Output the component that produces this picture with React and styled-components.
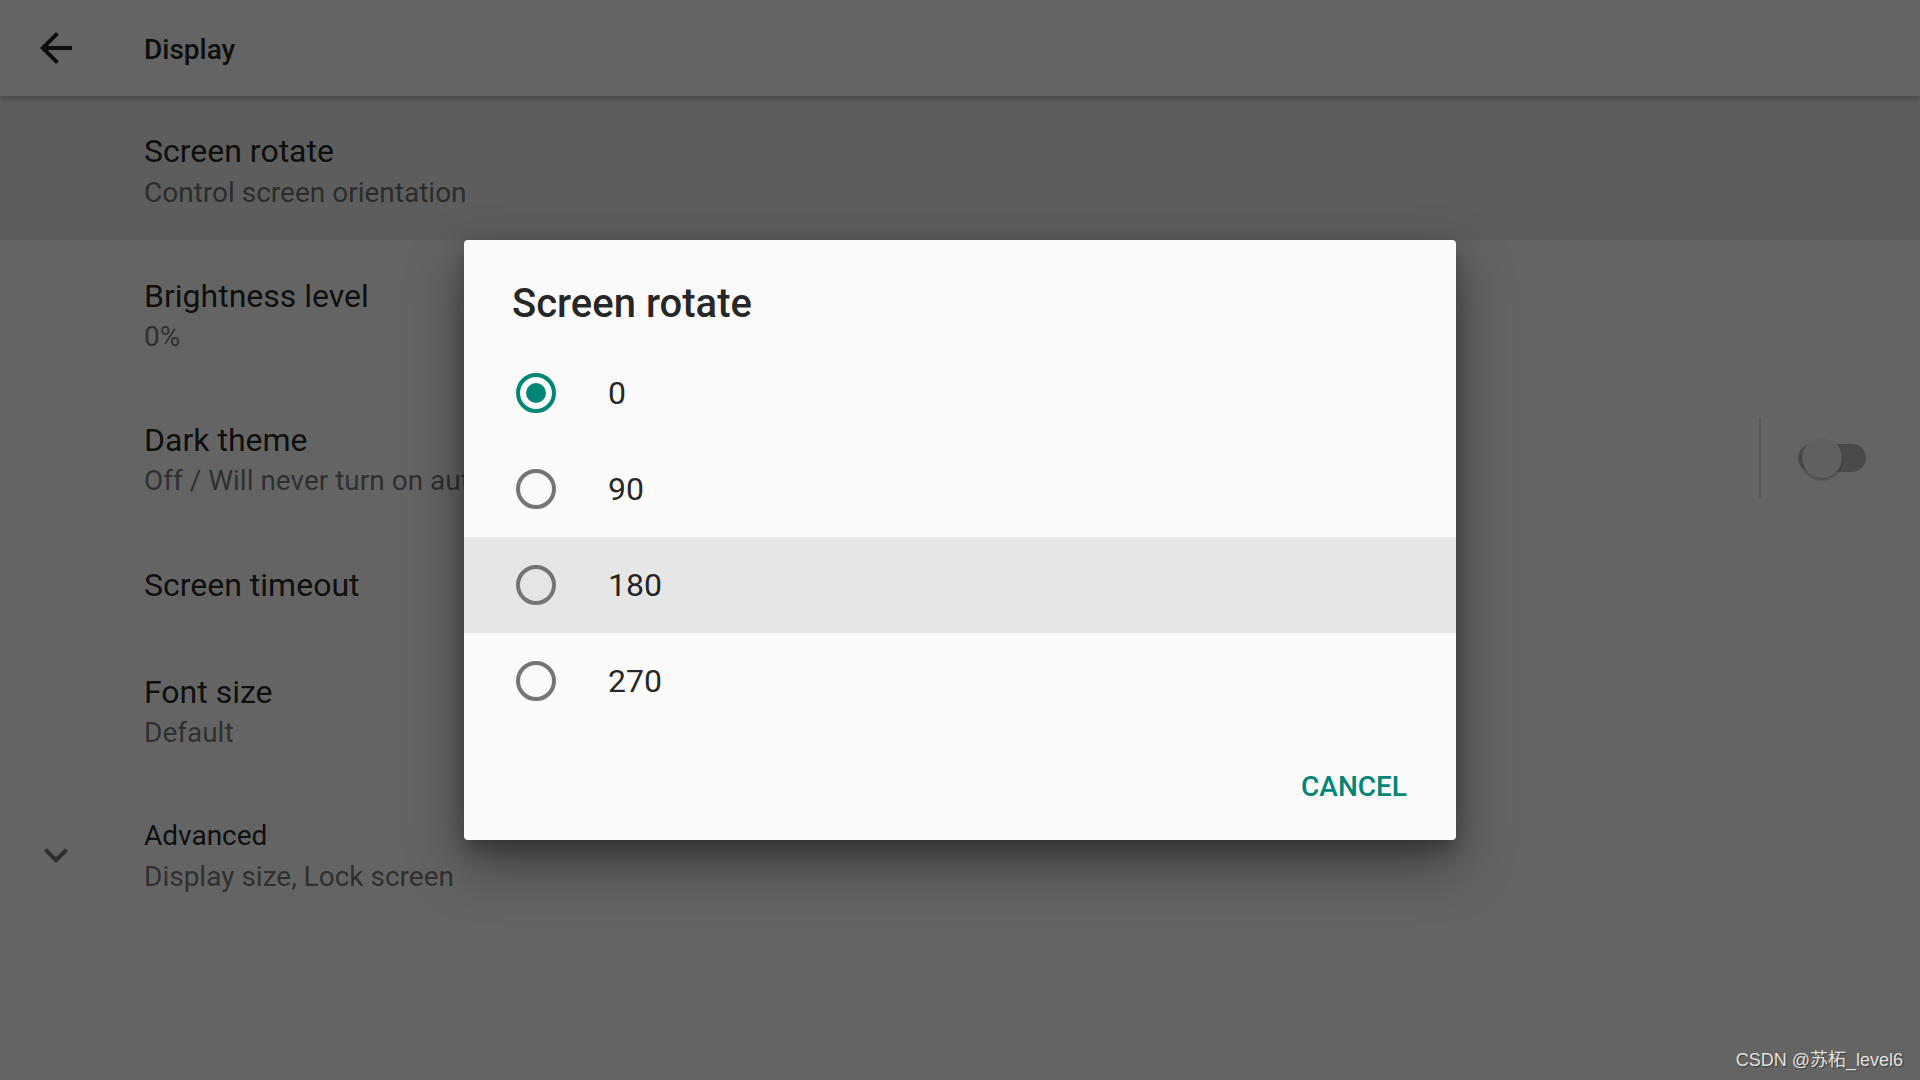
import React from 'react';
import styled, { createGlobalStyle } from 'styled-components';

const GlobalStyle = createGlobalStyle`
  html, body {
    margin: 0;
    padding: 0;
  }
  body {
    font-family: Roboto, "Noto Sans", sans-serif;
    background: #fafafa;
  }
`;

const Screen = styled.div`
  position: relative;
  width: 1920px;
  height: 1080px;
  overflow: hidden;
  background: #fafafa;
`;

const Toolbar = styled.div`
  position: relative;
  z-index: 1;
  display: flex;
  align-items: center;
  height: 96px;
  background: #fafafa;
  box-shadow: 0 2px 5px rgba(0, 0, 0, 0.28);
`;

const NavButton = styled.div`
  display: flex;
  align-items: center;
  justify-content: center;
  width: 112px;
  height: 96px;
`;

const ToolbarTitle = styled.div`
  margin-left: 32px;
  padding-top: 2px;
  font-size: 28px;
  font-weight: 500;
  color: rgba(0, 0, 0, 0.87);
`;

const PrefRow = styled.div`
  display: flex;
  align-items: center;
  background: ${(p) => (p.$active ? '#e8e8e8' : 'transparent')};
`;

const IconSlot = styled.div`
  display: flex;
  align-items: center;
  justify-content: center;
  align-self: stretch;
  box-sizing: border-box;
  width: 112px;
  padding-top: 6px;
  flex-shrink: 0;
`;

const PrefText = styled.div`
  flex: 1;
  min-width: 0;
  padding: ${(p) =>
    p.$first ? '35px 0 29px 32px' : p.$single ? '37px 0 31px 32px' : '36px 0 29px 32px'};
`;

const PrefTitle = styled.div`
  font-size: ${(p) => (p.$small ? '28px' : '32px')};
  line-height: 40px;
  color: rgba(0, 0, 0, 0.87);
`;

const PrefSummary = styled.div`
  margin-top: ${(p) => (p.$tight ? '4px' : '3px')};
  font-size: 28px;
  line-height: 36px;
  color: rgba(0, 0, 0, 0.54);
  white-space: nowrap;
`;

const WidgetArea = styled.div`
  display: flex;
  align-items: center;
  margin-top: 4px;
  padding-right: 54px;
`;

const WidgetDivider = styled.div`
  width: 2px;
  height: 80px;
  margin-right: 37px;
  background: #dedede;
`;

const SwitchTrack = styled.div`
  position: relative;
  width: 68px;
  height: 28px;
  border-radius: 14px;
  background: #bababa;
`;

const SwitchThumb = styled.div`
  position: absolute;
  left: 4px;
  top: -6px;
  width: 40px;
  height: 40px;
  border-radius: 50%;
  background: #f1f1f1;
  box-shadow: 0 2px 3px rgba(0, 0, 0, 0.3);
`;

const Scrim = styled.div`
  position: absolute;
  inset: 0;
  z-index: 2;
  display: flex;
  align-items: center;
  justify-content: center;
  background: rgba(0, 0, 0, 0.6);
`;

const Dialog = styled.div`
  width: 992px;
  background: #fafafa;
  border-radius: 4px;
  box-shadow: 0 24px 56px rgba(0, 0, 0, 0.38), 0 10px 20px rgba(0, 0, 0, 0.25);
  overflow: hidden;
`;

const DialogTitle = styled.div`
  padding: 40px 48px 17px;
  font-size: 40px;
  line-height: 48px;
  font-weight: 500;
  color: rgba(0, 0, 0, 0.87);
`;

const OptionList = styled.div`
  display: flex;
  flex-direction: column;
`;

const Option = styled.div`
  display: flex;
  align-items: center;
  height: 96px;
  padding-left: 40px;
  background: ${(p) => (p.$focused ? '#e6e6e6' : 'transparent')};
`;

const RadioBox = styled.div`
  display: flex;
  align-items: center;
  justify-content: center;
  width: 64px;
  height: 64px;
`;

const RadioRing = styled.div`
  display: flex;
  align-items: center;
  justify-content: center;
  box-sizing: border-box;
  width: 40px;
  height: 40px;
  border-radius: 50%;
  border: 4px solid ${(p) => (p.$checked ? '#008577' : '#757575')};
`;

const RadioDot = styled.div`
  width: 20px;
  height: 20px;
  border-radius: 50%;
  background: #008577;
`;

const OptionLabel = styled.div`
  margin-left: 40px;
  font-size: 32px;
  color: rgba(0, 0, 0, 0.87);
`;

const ButtonBar = styled.div`
  display: flex;
  justify-content: flex-end;
  padding: 21px 33px 18px;
`;

const TextButton = styled.div`
  display: flex;
  align-items: center;
  height: 72px;
  padding: 0 16px;
  font-size: 28px;
  font-weight: 500;
  color: #008577;
`;

const Watermark = styled.div`
  position: absolute;
  right: 17px;
  bottom: 9px;
  z-index: 3;
  font-family: "Liberation Sans", "Noto Sans CJK SC", sans-serif;
  font-size: 18px;
  color: #e2e2e2;
  text-shadow: 1px 1px 1px rgba(0, 0, 0, 0.45);
`;

const BackArrow = () => (
  <svg width="48" height="48" viewBox="0 0 24 24">
    <path
      fill="rgba(0,0,0,0.87)"
      d="M20 11H7.83l5.59-5.59L12 4l-8 8 8 8 1.41-1.41L7.83 13H20v-2z"
    />
  </svg>
);

const ExpandMore = () => (
  <svg width="48" height="48" viewBox="0 0 24 24">
    <path
      fill="rgba(0,0,0,0.54)"
      d="M16.59 8.59L12 13.17 7.41 8.59 6 10l6 6 6-6z"
    />
  </svg>
);

const prefs = [
  { title: 'Screen rotate', summary: 'Control screen orientation', active: true },
  { title: 'Brightness level', summary: '0%' },
  { title: 'Dark theme', summary: 'Off / Will never turn on automatically', toggle: true },
  { title: 'Screen timeout' },
  { title: 'Font size', summary: 'Default' },
  { title: 'Advanced', summary: 'Display size, Lock screen', expand: true },
];

const options = ['0', '90', '180', '270'];

const App = () => {
  return (
    <Screen>
      <GlobalStyle />
      <Toolbar>
        <NavButton>
          <BackArrow />
        </NavButton>
        <ToolbarTitle>Display</ToolbarTitle>
      </Toolbar>

      {prefs.map((p, i) => (
        <PrefRow key={p.title} $active={p.active}>
          <IconSlot>{p.expand && <ExpandMore />}</IconSlot>
          <PrefText $first={i === 0} $single={!p.summary}>
            <PrefTitle $small={p.expand}>{p.title}</PrefTitle>
            {p.summary && <PrefSummary $tight={i === 0}>{p.summary}</PrefSummary>}
          </PrefText>
          {p.toggle && (
            <WidgetArea>
              <WidgetDivider />
              <SwitchTrack>
                <SwitchThumb />
              </SwitchTrack>
            </WidgetArea>
          )}
        </PrefRow>
      ))}

      <Scrim>
        <Dialog>
          <DialogTitle>Screen rotate</DialogTitle>
          <OptionList>
            {options.map((o, i) => (
              <Option key={o} $focused={i === 2}>
                <RadioBox>
                  <RadioRing $checked={i === 0}>{i === 0 && <RadioDot />}</RadioRing>
                </RadioBox>
                <OptionLabel>{o}</OptionLabel>
              </Option>
            ))}
          </OptionList>
          <ButtonBar>
            <TextButton>CANCEL</TextButton>
          </ButtonBar>
        </Dialog>
      </Scrim>

      <Watermark>CSDN @苏柘_level6</Watermark>
    </Screen>
  );
};

export default App;
